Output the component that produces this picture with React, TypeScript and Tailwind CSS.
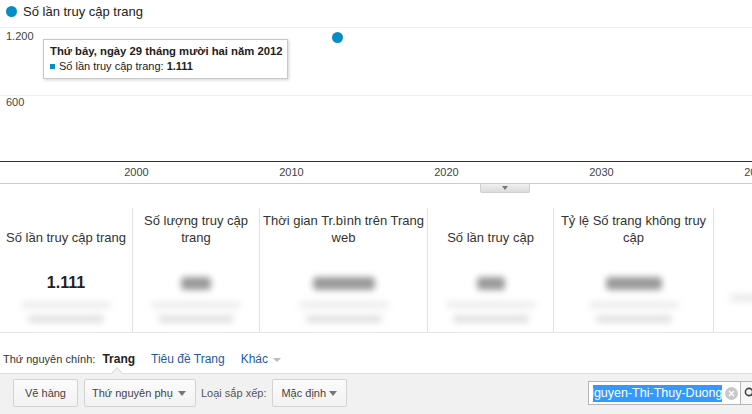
import React from "react";

const years = ["2000", "2010", "2020", "2030", "2040"];

function Caret() {
    return <span className="inline-block w-0 h-0 border-l-[4px] border-r-[4px] border-t-[5px] border-l-transparent border-r-transparent border-t-[#777]" />;
}

function Blur({ w, h, c }: { w: string; h: string; c: string }) {
    return <div className={`${w} ${h} ${c} blur-[3px] rounded-sm`} />;
}

type Card = { title: React.ReactNode; value?: string; width: string; blobW: string };

const cards: Card[] = [
    { title: "Số lần truy cập trang", value: "1.111", width: "w-[133px]", blobW: "w-[30px]" },
    { title: <>Số lượng truy cập<br />trang</>, width: "w-[127px]", blobW: "w-[30px]" },
    { title: <>Thời gian Tr.bình trên Trang<br />web</>, width: "w-[168px]", blobW: "w-[62px]" },
    { title: "Số lần truy cập", width: "w-[126px]", blobW: "w-[28px]" },
    { title: <>Tỷ lệ Số trang không truy<br />cập</>, width: "w-[160px]", blobW: "w-[56px]" },
];

export default function App() {
    return (
        <div className="relative w-[752px] h-[414px] overflow-hidden bg-white text-[#333] font-['Liberation_Sans',Arial,sans-serif]">
            {/* legend */}
            <div className="flex items-center h-[27px] pl-[6px] gap-[6px] pb-[5px]">
                <span className="w-[11px] h-[11px] rounded-full bg-[#058dc7]" />
                <span className="text-[13px] leading-[17px] text-[#222]">Số lần truy cập trang</span>
            </div>

            {/* chart grid */}
            <div className="h-[1px] bg-[#eeeeee]" />
            <div className="h-[67px] pl-[6px] pt-[2px] text-[11px] leading-[13px] text-[#444]">1.200</div>
            <div className="h-[1px] bg-[#eeeeee]" />
            <div className="h-[65px] pl-[6px] text-[11px] leading-[13px] text-[#444]">600</div>
            <div className="h-[1px] bg-[#333]" />
            <div className="flex h-[21px] items-center pl-[59px] text-[11px] text-[#444]">
                {years.map((y) => (
                    <div key={y} className="w-[155px] shrink-0 text-center">{y}</div>
                ))}
            </div>
            <div className="h-[1px] bg-[#cccccc]" />
            <div className="pl-[480px]">
                <div className="w-[50px] h-[9px] flex items-center justify-center bg-gradient-to-b from-[#f0f0f0] to-[#dcdcdc] border border-t-0 border-[#cfcfcf] rounded-b-[2px]">
                    <span className="inline-block w-0 h-0 border-l-[3px] border-r-[3px] border-t-[4px] border-l-transparent border-r-transparent border-t-[#777]" />
                </div>
            </div>

            {/* scorecards */}
            <div className="mt-[15px] flex h-[125px] border-b border-[#e6e6e6]">
                {cards.map((c, i) => (
                    <div key={i} className={`${c.width} shrink-0 flex flex-col items-center border-r border-[#e2e2e2]`}>
                        <div className="h-[36px] mt-[2px] flex items-end justify-center text-center text-[13px] leading-[17px] text-[#333] whitespace-nowrap">
                            {c.title}
                        </div>
                        <div className="h-[20px] mt-[27px] flex items-center justify-center">
                            {c.value ? (
                                <span className="text-[16px] font-bold text-[#222]">{c.value}</span>
                            ) : (
                                <Blur w={c.blobW} h="h-[13px]" c="bg-[#9a9a9a]" />
                            )}
                        </div>
                        <div className="mt-[8px] flex flex-col items-center gap-[6px]">
                            <Blur w="w-[90px]" h="h-[8px]" c="bg-[#efefef]" />
                            <Blur w="w-[76px]" h="h-[8px]" c="bg-[#e2e2e2]" />
                        </div>
                    </div>
                ))}
                <div className="flex-1 flex flex-col justify-end pb-[30px] pl-[16px]">
                    <Blur w="w-[30px]" h="h-[8px]" c="bg-[#ececec]" />
                </div>
            </div>

            {/* primary dimension */}
            <div className="mt-[19px] h-[21px] flex items-start pl-[3px] text-[11px] leading-[15px]">
                <span className="text-[#333]">Thứ nguyên chính:</span>
                <span className="ml-[7px] font-bold text-[#222] text-[12px]">Trang</span>
                <span className="ml-[16px] text-[#1a5aa8] text-[12px]">Tiêu đề Trang</span>
                <span className="ml-[16px] text-[#1a5aa8] text-[12px] flex items-center gap-[5px]">
                    Khác <span className="inline-block w-0 h-0 border-l-[4px] border-r-[4px] border-t-[4px] border-l-transparent border-r-transparent border-t-[#bbb]" />
                </span>
            </div>

            {/* toolbar */}
            <div className="relative h-[41px] border-t border-[#dddddd] bg-[#f1f1f1] flex items-start pt-[5px] pl-[13px] text-[11px] text-[#444] whitespace-nowrap">
                <span className="absolute left-[113px] top-[-5px] w-[8px] h-[8px] rotate-45 bg-[#f1f1f1] border-l border-t border-[#dddddd]" />
                <button className="w-[65px] h-[28px] shrink-0 bg-gradient-to-b from-[#fbfbfb] to-[#f2f2f2] border border-[#d3d3d3] rounded-[2px]">
                    Vẽ hàng
                </button>
                <button className="ml-[6px] w-[112px] h-[28px] shrink-0 flex items-center justify-between pl-[7px] pr-[9px] bg-gradient-to-b from-[#fbfbfb] to-[#f2f2f2] border border-[#d3d3d3] rounded-[2px]">
                    Thứ nguyên phụ <Caret />
                </button>
                <span className="ml-[5px] h-[28px] shrink-0 flex items-center text-[#555]">Loại sắp xếp:</span>
                <button className="ml-[6px] w-[75px] h-[28px] shrink-0 flex items-center justify-between pl-[8px] pr-[9px] bg-gradient-to-b from-[#fbfbfb] to-[#f2f2f2] border border-[#d3d3d3] rounded-[2px]">
                    Mặc định <Caret />
                </button>

                <div className="ml-[241px] mt-[2px] flex shrink-0">
                    <div className="w-[153px] h-[24px] flex items-center bg-white border border-[#b5b5b5] pl-[4px]">
                        <div className="w-[129px] flex justify-end overflow-hidden">
                            <span className="whitespace-nowrap bg-[#3399ff] text-white text-[12.5px] leading-[17px]">Nguyen-Thi-Thuy-Duong</span>
                        </div>
                        <span className="ml-[3px] w-[13px] h-[13px] rounded-full bg-[#c8c8c8] flex items-center justify-center">
                            <svg width="7" height="7" viewBox="0 0 7 7" stroke="white" strokeWidth="1.4">
                                <path d="M1 1L6 6M6 1L1 6" />
                            </svg>
                        </span>
                    </div>
                    <div className="w-[36px] h-[24px] border border-l-0 border-[#b5b5b5] bg-[#f7f7f7] flex items-center pl-[3px]">
                        <svg width="12" height="12" viewBox="0 0 12 12" fill="none" stroke="#444" strokeWidth="1.6">
                            <circle cx="5" cy="5" r="3.6" />
                            <path d="M7.6 7.6L11 11" />
                        </svg>
                    </div>
                </div>
            </div>

            {/* data point */}
            <span className="absolute left-[332px] top-[32px] w-[11px] h-[11px] rounded-full bg-[#058dc7]" />

            {/* tooltip */}
            <div className="absolute left-[43px] top-[39px] w-[245px] h-[40px] bg-white border border-[#c8c8c8] shadow-[1px_1px_3px_rgba(0,0,0,0.18)] px-[6px] pt-[4px] whitespace-nowrap">
                <div className="text-[11.3px] leading-[15px] font-bold text-[#222]">Thứ bảy, ngày 29 tháng mười hai năm 2012</div>
                <div className="flex items-center text-[11px] leading-[15px] text-[#222]">
                    <span className="w-[5px] h-[5px] bg-[#058dc7] mr-[4px]" />
                    Số lần truy cập trang:&nbsp;<b>1.111</b>
                </div>
            </div>
        </div>
    );
}
